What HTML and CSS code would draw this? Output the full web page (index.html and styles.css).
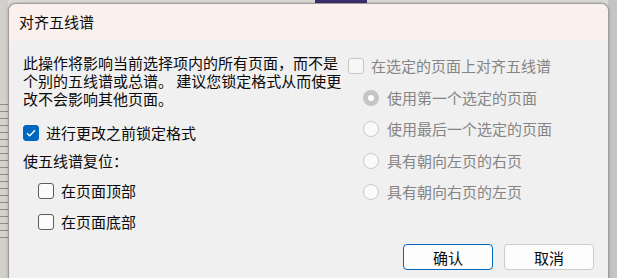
FILE: index.html
```html
<!DOCTYPE html>
<html lang="zh-CN">
<head>
    <meta charset="UTF-8">
    <meta name="viewport" content="width=device-width, initial-scale=1.0">
    <title>对齐五线谱</title>
    <link rel="stylesheet" href="styles.css">
</head>
<body>
<div class="desktop">
    <div class="dialog">
        <header class="title-bar">对齐五线谱</header>
        <div class="dialog-body">
            <div class="col-left">
                <p class="note">此操作将影响当前选择项内的所有页面，而不是个别的五线谱或总谱。 建议您锁定格式从而使更改不会影响其他页面。</p>
                <label class="option first">
                    <span class="box checked">
                        <svg width="10" height="8" viewBox="0 0 10 8"><path d="M1 4.2 L3.7 6.8 L9 1.2" fill="none" stroke="#fff" stroke-width="1.3"/></svg>
                    </span>
                    进行更改之前锁定格式
                </label>
                <div class="group-label">使五线谱复位：</div>
                <label class="option indent">
                    <span class="box"></span>
                    在页面顶部
                </label>
                <label class="option indent">
                    <span class="box"></span>
                    在页面底部
                </label>
            </div>
            <div class="col-right">
                <label class="option disabled top">
                    <span class="box"></span>
                    在选定的页面上对齐五线谱
                </label>
                <label class="option disabled indent">
                    <span class="radio checked"></span>
                    使用第一个选定的页面
                </label>
                <label class="option disabled indent">
                    <span class="radio"></span>
                    使用最后一个选定的页面
                </label>
                <label class="option disabled indent">
                    <span class="radio"></span>
                    具有朝向左页的右页
                </label>
                <label class="option disabled indent">
                    <span class="radio"></span>
                    具有朝向右页的左页
                </label>
            </div>
        </div>
        <div class="actions">
            <button class="btn default">确认</button>
            <button class="btn">取消</button>
        </div>
    </div>
</div>
</body>
</html>
```

FILE: styles.css
```css
*, *:before, *:after {
    box-sizing: border-box;
}

body {
    margin: 0;
    height: 278px;
    overflow: hidden;
    font-family: "Noto Sans CJK SC", "Liberation Sans", sans-serif;
    font-size: 15px;
    color: #0a0a0a;
    background:
        linear-gradient(#3b2f6e, #3b2f6e) 315px 0 / 52px 3px no-repeat,
        repeating-linear-gradient(#d6d2ce 0, #d6d2ce 6px, #8d8a87 6px, #8d8a87 7px) 0 98px / 8px 142px no-repeat,
        linear-gradient(90deg, #d3d0cc 0, #d3d0cc 8px, #dcdad7 8px, #dcdad7 608px, #c4c4c4 608px);
}

.desktop {
    padding: 3px 0 0 8px;
}

.dialog {
    width: 601px;
    height: 275px;
    background-color: #f0f0f0;
    border: 1px solid #9c9c9c;
    border-bottom: none;
    border-radius: 8px 8px 0 0;
    box-shadow: 0 0 3px rgba(0, 0, 0, 0.25);
    overflow: hidden;
}

.title-bar {
    height: 37px;
    padding: 8px 0 0 10px;
    background-color: #faf1ef;
    line-height: 20px;
}

.dialog-body {
    display: flex;
    padding: 13px 14px 0 14px;
}

.col-left {
    width: 325px;
}

.note {
    margin: 0;
    width: 322px;
    line-height: 18px;
}

.option {
    display: flex;
    align-items: center;
    gap: 7px;
    height: 20px;
    line-height: 20px;
}

.option.first {
    margin-top: 15px;
}

.option.indent {
    margin-left: 15px;
}

.col-left .option.indent {
    margin-top: 11px;
}

.group-label {
    margin-top: 9px;
    line-height: 18px;
}

.col-right .option.top {
    margin-top: 2px;
}

.col-right .option.indent {
    margin-top: 11.5px;
    gap: 8px;
}

.option.disabled {
    color: #858585;
}

.box {
    width: 16px;
    height: 16px;
    flex: none;
    display: flex;
    align-items: center;
    justify-content: center;
    border: 1px solid #5c5c5c;
    border-radius: 3px;
    background-color: #fbfbfb;
}

.box.checked {
    border-color: #0067c0;
    background-color: #0067c0;
}

.disabled .box {
    border-color: #c6c6c6;
    background-color: #f7f7f7;
}

.radio {
    width: 16px;
    height: 16px;
    flex: none;
    border: 1px solid #c8c8c8;
    border-radius: 50%;
    background-color: #fafafa;
}

.radio.checked {
    border: 5px solid #c5c5c5;
    background-color: #ffffff;
}

.actions {
    display: flex;
    justify-content: flex-end;
    gap: 11px;
    padding: 0 14px;
    margin-top: 12px;
}

.btn {
    width: 90px;
    height: 26px;
    font-family: inherit;
    font-size: 15px;
    color: #0a0a0a;
    background-color: #fdfdfd;
    border: 1px solid #cccccc;
    border-radius: 4px;
    padding: 0;
}

.btn.default {
    border-color: #0067c0;
}
```
